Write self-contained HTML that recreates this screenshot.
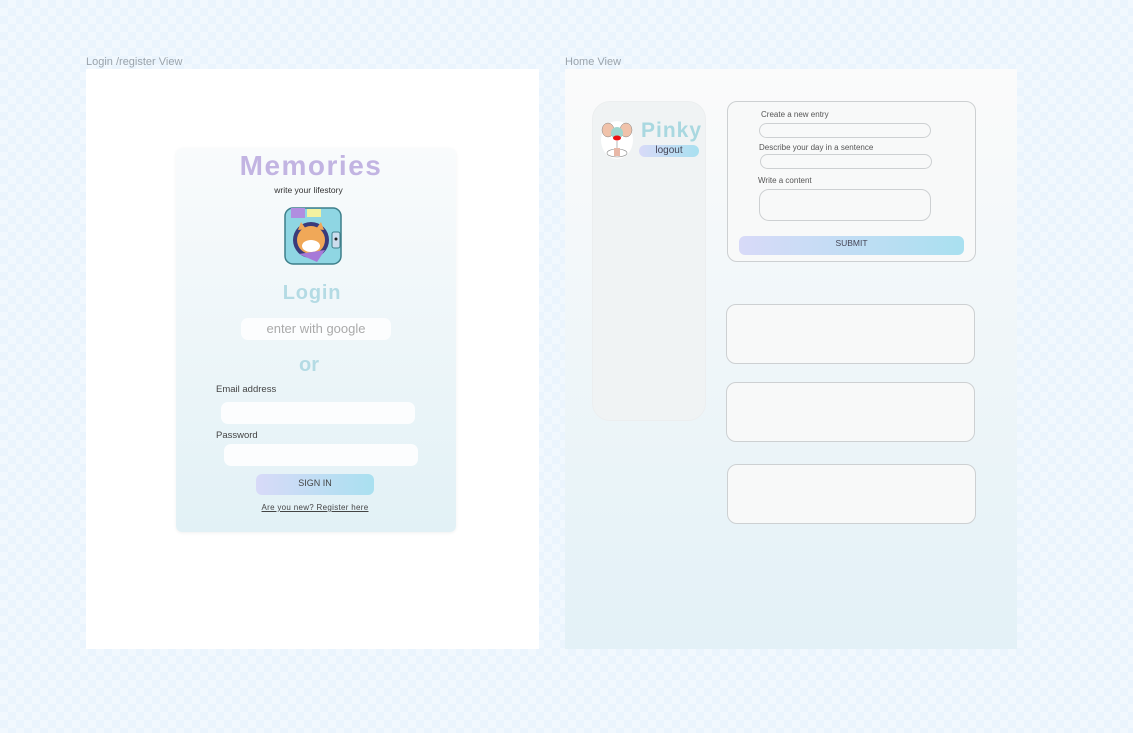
<!DOCTYPE html>
<html><head><meta charset="utf-8"><style>
*{box-sizing:border-box;margin:0;padding:0}
body{width:1133px;height:733px;overflow:hidden;position:relative;font-family:"Liberation Sans",sans-serif;
background-color:#eaf4fd;
background-image:linear-gradient(45deg,#f1f8fe 25%,transparent 25%,transparent 75%,#f1f8fe 75%),linear-gradient(45deg,#f1f8fe 25%,transparent 25%,transparent 75%,#f1f8fe 75%);
background-size:16px 16px;background-position:0 0,8px 8px}
.abs{position:absolute}
.lbl{font-size:11px;color:#9aa3ab}
.frame1{left:86px;top:69px;width:453px;height:580px;background:#fff}
.card{left:176px;top:148px;width:280px;height:384px;border-radius:6px;background:linear-gradient(#f9fbfc,#e2f1f6);box-shadow:0 1px 3px rgba(0,0,0,.06)}
.c{text-align:center}
.inp{background:#fcfdfe;border-radius:7px}
.grad{background:linear-gradient(90deg,#d8daf8,#a9e0f0)}
.frame2{left:565px;top:69px;width:452px;height:580px;background:linear-gradient(#fbfbfb,#e3f1f7)}
.side{left:592px;top:101px;width:114px;height:320px;border-radius:18px;background:#f0f3f4;border:1px solid #eceeef}
.box{border:1px solid #cdd0d2;border-radius:10px;background:#f8f9f9}
.small{font-size:8px;color:#555}
</style></head><body>
<div class="abs lbl" style="left:86px;top:56px">Login /register View</div>
<div class="abs lbl" style="left:565px;top:56px">Home View</div>
<div class="abs frame1"></div>
<div class="abs card"></div>
<div class="abs c" style="left:170px;top:150px;width:282px;font-size:28px;font-weight:bold;color:#c2b4e2;letter-spacing:1.5px">Memories</div>
<div class="abs c" style="left:176px;top:185px;width:265px;font-size:8.5px;color:#333">write your lifestory</div>
<svg class="abs" style="left:283px;top:204px" width="62" height="62" viewBox="0 0 62 62">
<rect x="2" y="4" width="56" height="56" rx="8" fill="#8fd6e3" stroke="#3d7f8a" stroke-width="1.5"/>
<rect x="8" y="4" width="14" height="10" fill="#b08ee0"/><rect x="24" y="5" width="14" height="8" fill="#f2f2a0"/>
<circle cx="28" cy="36" r="18" fill="#3b3b7a"/><circle cx="28" cy="36" r="14" fill="#f0a858"/>
<path d="M15 26 L18 18 L23 25 Z M41 26 L38 18 L33 25 Z" fill="#f0a858"/>
<ellipse cx="28" cy="42" rx="9" ry="6" fill="#fff"/>
<path d="M16 50 L34 58 L42 46 Z" fill="#a77ad8"/>
<rect x="49" y="28" width="8" height="16" rx="2" fill="#cde" stroke="#3d7f8a"/>
<circle cx="53" cy="35" r="1.5" fill="#222"/>
</svg>
<div class="abs c" style="left:176px;top:282px;width:272px;font-size:20px;font-weight:bold;color:#b4dbe4;letter-spacing:.8px">Login</div>
<div class="abs inp c" style="left:241px;top:318px;width:150px;height:22px;font-size:13px;color:#aaa;line-height:22px">enter with google</div>
<div class="abs c" style="left:176px;top:354px;width:266px;font-size:20px;font-weight:bold;color:#b4dbe4">or</div>
<div class="abs" style="left:216px;top:384px;font-size:9.5px;color:#444">Email address</div>
<div class="abs inp" style="left:221px;top:402px;width:194px;height:22px"></div>
<div class="abs" style="left:216px;top:430px;font-size:9.5px;color:#444">Password</div>
<div class="abs inp" style="left:224px;top:444px;width:194px;height:22px"></div>
<div class="abs grad c" style="left:256px;top:474px;width:118px;height:21px;border-radius:6px;font-size:9px;color:#444;line-height:19px">SIGN IN</div>
<div class="abs c" style="left:256px;top:503px;width:118px;font-size:8px;color:#444;text-decoration:underline;letter-spacing:.3px">Are you new? Register here</div>

<div class="abs frame2"></div>
<div class="abs side"></div>
<svg class="abs" style="left:600px;top:120px" width="34" height="40" viewBox="0 0 34 40">
<ellipse cx="17" cy="20" rx="16" ry="19" fill="#fff"/>
<ellipse cx="8" cy="10" rx="6" ry="7" fill="#f0c2aa" stroke="#888" stroke-width=".5"/><ellipse cx="26" cy="10" rx="6" ry="7" fill="#f0c2aa" stroke="#888" stroke-width=".5"/>
<ellipse cx="17" cy="13" rx="6" ry="6" fill="#9fd6cf"/><ellipse cx="17" cy="18" rx="4" ry="2.5" fill="#e11"/>
<line x1="17" y1="21" x2="17" y2="28" stroke="#888" stroke-width=".6"/>
<ellipse cx="17" cy="33" rx="10" ry="4" fill="none" stroke="#888" stroke-width=".6"/><rect x="14" y="28" width="6" height="8" fill="#e8b8a8"/>
</svg>
<div class="abs" style="left:641px;top:119px;font-size:21px;font-weight:bold;color:#a9d8e0;letter-spacing:1px">Pinky</div>
<div class="abs grad c" style="left:639px;top:145px;width:60px;height:12px;border-radius:6px;font-size:10px;color:#445;line-height:12px">logout</div>

<div class="abs box" style="left:727px;top:101px;width:249px;height:161px"></div>
<div class="abs small" style="left:761px;top:110px">Create a new entry</div>
<div class="abs box" style="left:759px;top:123px;width:172px;height:15px"></div>
<div class="abs small" style="left:759px;top:143px">Describe your day in a sentence</div>
<div class="abs box" style="left:760px;top:154px;width:172px;height:15px"></div>
<div class="abs small" style="left:758px;top:176px">Write a content</div>
<div class="abs box" style="left:759px;top:189px;width:172px;height:32px"></div>
<div class="abs grad c" style="left:739px;top:236px;width:225px;height:19px;border-radius:6px;font-size:8.5px;color:#445;line-height:15px">SUBMIT</div>

<div class="abs box" style="left:726px;top:304px;width:249px;height:60px"></div>
<div class="abs box" style="left:726px;top:382px;width:249px;height:60px"></div>
<div class="abs box" style="left:727px;top:464px;width:249px;height:60px"></div>
</body></html>
